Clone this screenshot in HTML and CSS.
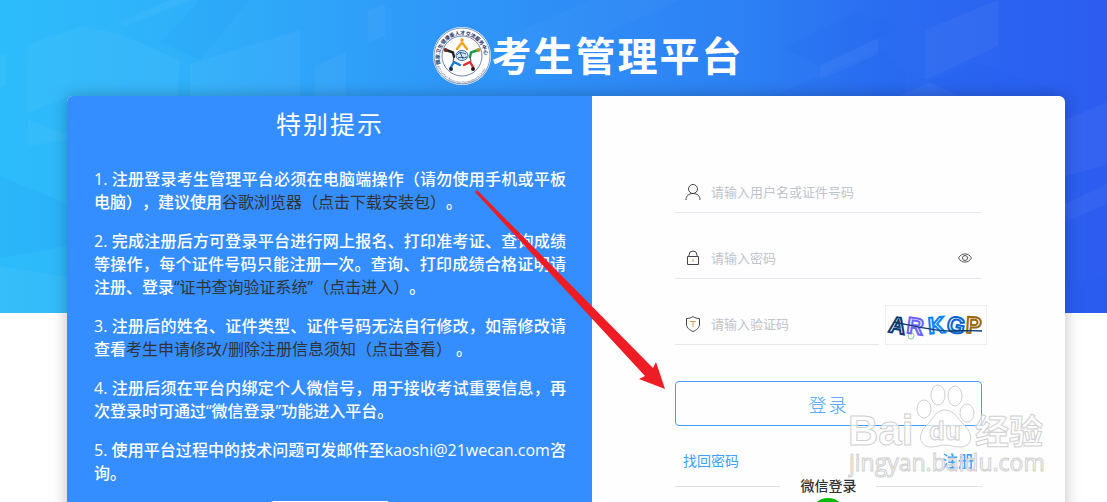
FILE: index.html
```html
<!DOCTYPE html>
<html lang="zh-CN">
<head>
  <meta charset="UTF-8">
  <meta name="viewport" content="width=device-width, initial-scale=1.0">
  <title>考生管理平台</title>
  <link rel="stylesheet" href="styles.css">
</head>
<body>
  <svg class="banner" viewBox="0 0 1107 313" preserveAspectRatio="none" aria-hidden="true">
    <defs>
      <linearGradient id="sky" x1="0" y1="0" x2="1" y2="0">
        <stop offset="0" stop-color="#2cbcfa"/>
        <stop offset="0.15" stop-color="#2fb2fa"/>
        <stop offset="0.4" stop-color="#2f97f8"/>
        <stop offset="0.67" stop-color="#2d81f4"/>
        <stop offset="0.8" stop-color="#2a6cf1"/>
        <stop offset="1" stop-color="#2c5cf0"/>
      </linearGradient>
    </defs>
    <rect width="1107" height="313" fill="url(#sky)"/>
    <g fill="#fff" fill-opacity="0.04">
      <path d="M28 44 84 26 120 34 180 60 178 96H70L26 114Z"/>
      <path d="M190 64 300 30 300 96H190Z"/>
      <path d="M0 55 6 55V85L0 88Z"/>
      <path d="M28 120 68 135V140L28 146Z"/>
      <path d="M0 266 67 277V313H0Z"/>
      <path d="M118 22 170 0H192L125 26Z"/>
      <path d="M315 66 346 52V96H315Z"/>
      <path d="M368 10 385 4V36L368 42Z"/>
      <path d="M820 65 878 38V54L820 80Z"/>
      <path d="M925 30 998 0V46L925 80Z"/>
      <path d="M900 96 930 82 958 96Z"/>
      <path d="M1065 204 1107 184V204L1065 222Z"/>
      <path d="M1065 120 1107 102V165L1065 176Z"/>
      <path d="M500 40 590 0H680L500 82Z" fill-opacity="0.02"/>
    </g>
    <g fill="#0a4fe8" fill-opacity="0.05">
      <path d="M784 48 855 12 900 28 820 66Z"/>
      <path d="M774 96 880 50 905 70V96Z"/>
      <path d="M928 82 975 62 1055 90V96H945Z"/>
      <path d="M1050 285 1107 277V313H1050Z"/>
      <path d="M160 42 200 0H250L200 60Z" fill-opacity="0.03"/>
      <path d="M0 176 67 204V246L0 258Z"/>
    </g>
  </svg>

  <header class="header">
    <svg class="logo" viewBox="0 0 60 60" aria-hidden="true">
      <defs>
        <path id="ring-top" d="M8.500 38A22.500 22.500 0 1 1 51.500 38"/>
        <path id="ring-bottom" d="M4 36A26.500 26.500 0 0 0 56 36"/>
      </defs>
      <circle cx="30" cy="30" r="29" fill="#fff"/>
      <circle cx="30" cy="30" r="28" fill="none" stroke="#34508c" stroke-width="0.600"/>
      <circle cx="30" cy="30" r="20" fill="none" stroke="#34508c" stroke-width="0.700"/>
      <text class="logo-cn"><textPath href="#ring-top">国家卫生健康委人才交流服务中心</textPath></text>
      <text class="logo-en"><textPath href="#ring-bottom">Health Human Resources Development Center</textPath></text>
      <g fill="none" stroke-width="2.400" stroke-linecap="round" stroke-linejoin="round">
        <path d="M25 23 30 16.500 35 23" stroke="#f0a41c"/>
        <path d="M14 24 21 26.500 22 31" stroke="#222"/>
        <path d="M46 24 39 26.500 38 31" stroke="#1c9a4c"/>
        <path d="M19 41 22 36 28 39" stroke="#1478d4"/>
        <path d="M41 41 38 36 32 39" stroke="#e02b30"/>
        <path d="M22 31 21 35M38 31 39 35" stroke="#444" stroke-width="1"/>
      </g>
      <circle cx="30" cy="14" r="1.800" fill="#f0a41c"/>
      <circle cx="13.500" cy="24" r="2" fill="#7b2a20"/>
      <circle cx="46.500" cy="24" r="2" fill="#b6951d"/>
      <circle cx="19" cy="43" r="2" fill="#1b2948"/>
      <circle cx="41" cy="43" r="2" fill="#2b1717"/>
      <ellipse cx="30" cy="29.500" rx="6" ry="5" fill="#d6e7f5" stroke="#3d6da5"/>
      <path d="M25 29c2-4 6-2 9-1M26 32c3-2 5 1 9-1M28 26l3 7" fill="none" stroke="#285387"/>
    </svg>
    <h1 class="title">考生管理平台</h1>
  </header>

  <main class="card">
    <section class="notice">
      <h2 class="notice-title">特别提示</h2>
      <p>1. 注册登录考生管理平台必须在电脑端操作（请勿使用手机或平板电脑），建议使用<a href="#">谷歌浏览器（点击下载安装包）</a>。</p>
      <p>2. 完成注册后方可登录平台进行网上报名、打印准考证、查询成绩等操作，每个证件号码只能注册一次。查询、打印成绩合格证明请注册、登录<a href="#">“证书查询验证系统”（点击进入）</a>。</p>
      <p>3. 注册后的姓名、证件类型、证件号码无法自行修改，如需修改请查看<a href="#">考生申请修改/删除注册信息须知（点击查看）</a> 。</p>
      <p>4. 注册后须在平台内绑定个人微信号，用于接收考试重要信息，再次登录时可通过“微信登录”功能进入平台。</p>
      <p>5. 使用平台过程中的技术问题可发邮件至kaoshi@21wecan.com咨询。</p>
      <button class="notice-button" type="button" aria-label="操作说明"></button>
    </section>

    <form class="login">
      <div class="field">
        <label for="username" aria-label="用户名">
          <svg class="icon" viewBox="0 0 16 16"><circle cx="8" cy="5" r="4.500"/><path d="M1 16c0-4 2.500-6.500 7-6.500s7 2.500 7 6.500"/></svg>
        </label>
        <input type="text" id="username" placeholder="请输入用户名或证件号码">
      </div>
      <div class="field">
        <label for="password" aria-label="密码">
          <svg class="icon" viewBox="0 0 16 16"><path d="M2.500 6.500h11v8h-11zM4 6.500V5a4 4 0 0 1 8 0v1.500"/><path class="gold" d="M8 9v3"/></svg>
        </label>
        <input type="password" id="password" placeholder="请输入密码">
        <button class="eye" type="button" aria-label="显示密码">
          <svg viewBox="0 0 14 14"><path d="M.500 7c3-5.500 10-5.500 13 0-3 5.500-10 5.500-13 0z"/><circle cx="7" cy="7" r="2.500"/></svg>
        </button>
      </div>
      <div class="captcha-row">
        <div class="field">
          <label for="captcha" aria-label="验证码">
            <svg class="icon" viewBox="0 0 16 16"><path d="M8 .500C6 2 4 2.500 1.500 2.500V8c0 4 3 6 6.500 7.500C11.500 14 14.500 12 14.500 8V2.500C12 2.500 10 2 8 .500z"/><path class="gold" d="M5 5.500h6M8 5.500V11"/></svg>
          </label>
          <input type="text" id="captcha" placeholder="请输入验证码">
        </div>
        <svg class="captcha" viewBox="0 0 100 38" role="img" aria-label="ARKGP">
          <circle cx="25" cy="30" r="3" fill="none" stroke="#8cc98c"/>
          <g class="captcha-text">
            <text x="3" y="27" stroke="#0d3b6e" transform="rotate(10 10 20)">A</text>
            <text x="21" y="28" stroke="#6c63ff" transform="rotate(8 29 20)">R</text>
            <text x="42" y="27" stroke="#0a84ff" transform="rotate(-5 50 20)">K</text>
            <text x="61" y="27" stroke="#0a66d0" transform="rotate(12 70 20)">G</text>
            <text x="80" y="27" stroke="#9c6a08" transform="rotate(4 88 20)">P</text>
          </g>
          <path d="M8 16C28 20 48 25 64 25S84 24 96 25" fill="none" stroke="#0d3b6e" stroke-width="1.300"/>
        </svg>
      </div>
      <button class="submit" type="submit">登录</button>
      <div class="links">
        <a href="#">找回密码</a>
        <a class="register" href="#">注册</a>
      </div>
      <div class="divider">微信登录</div>
      <button class="wechat" type="button" aria-label="微信登录"></button>
    </form>
  </main>

  <svg class="arrow" viewBox="0 0 192 200" aria-hidden="true">
    <path d="M1 2 3 0 179 178 182 172 191 199 165 189 171 186Z" fill="#ee1c24"/>
  </svg>

  <svg class="watermark" viewBox="0 0 200 96" aria-hidden="true">
    <g class="mark">
      <text class="mark-logo" x="0" y="61">Bai</text>
      <ellipse cx="76" cy="25" rx="7" ry="9"/>
      <ellipse cx="90" cy="11" rx="7" ry="10"/>
      <ellipse cx="107" cy="12" rx="7" ry="10"/>
      <ellipse cx="119" cy="29" rx="7" ry="9"/>
      <path d="M97 26c-9 0-12 9-19 16-10 10-5 21 5 21 6 0 9-2 14-2s9 2 15 2c11 0 15-11 5-21-7-7-11-16-20-16z"/>
      <text class="mark-du" x="81" y="56">du</text>
      <text class="mark-cn" x="127" y="60">经验</text>
      <text class="mark-url" x="1" y="87">jingyan.baidu.com</text>
    </g>
  </svg>
</body>
</html>
```

FILE: styles.css
```css
* {
  box-sizing: border-box;
}

body {
  position: relative;
  height: 100vh;
  margin: 0;
  overflow: hidden;
  background: #fff;
  color: #333;
  font-family: "Open Sans", "Noto Sans CJK SC", sans-serif;
  text-spacing-trim: space-all;
}

a {
  text-decoration: none;
}

button,
input {
  font-family: inherit;
}

/* 顶部背景 */
.banner {
  position: absolute;
  top: 0;
  left: 0;
  z-index: -1;
  width: 100%;
  height: 313px;
}

.header {
  display: flex;
  justify-content: center;
  align-items: center;
  height: 96px;
  padding: 16px 0 0 68px;
}

.logo {
  width: 60px;
  height: 60px;
}

.logo-cn {
  fill: #1d2f66;
  font-size: 5px;
  font-weight: bold;
}

.logo-en {
  fill: #34508c;
  font-size: 3px;
}

.title {
  margin: 0;
  color: #fff;
  font-size: 40px;
  font-weight: bold;
  line-height: 60px;
  letter-spacing: 2px;
}

/* 主体卡片 */
.card {
  display: flex;
  margin: 0 42px 0 67px;
  border-radius: 6px;
  overflow: hidden;
  background: #fefefe;
  box-shadow: 0 0 16px rgba(0, 0, 0, 0.25);
}

.notice {
  flex: none;
  width: 52.6%;
  padding: 9px 26px 24px 27px;
  background: #348eff;
  color: #fff;
  font-size: 16px;
  line-height: 23px;
  text-align: justify;
}

.notice-title {
  margin: 0 0 25px;
  font-size: 25px;
  font-weight: normal;
  line-height: 38px;
  letter-spacing: 2px;
  text-align: center;
}

.notice p {
  margin: 0 0 16px;
  font-weight: 500;
}

.notice a {
  color: #333;
  font-weight: 400;
}

.notice-button {
  display: block;
  width: 120px;
  height: 40px;
  margin: 0 auto;
  border: none;
  border-radius: 4px;
  background: #fff;
}

/* 登录表单 */
.login {
  flex: 1;
  min-width: 0;
  padding: 76px 83px 24px;
}

.field {
  display: flex;
  align-items: center;
  height: 41px;
  margin-bottom: 25px;
  padding: 0 10px;
  border-bottom: 1px solid #e6e6ee;
}

.field label {
  display: flex;
}

.field input {
  flex: 1;
  min-width: 0;
  height: 38px;
  padding: 0 10px;
  border: none;
  outline: none;
  background: transparent;
  font-size: 13px;
}

.field input::placeholder {
  color: #c0c4cc;
}

.icon {
  width: 16px;
  height: 16px;
  fill: none;
  stroke: #444;
}

.icon .gold {
  stroke: #d49a50;
}

.eye {
  display: flex;
  padding: 0;
  border: none;
  background: none;
}

.eye svg {
  width: 14px;
  height: 14px;
  fill: none;
  stroke: #555;
}

.captcha-row {
  display: flex;
  align-items: center;
  gap: 6px;
  margin: 0 -5px 36px 0;
}

.captcha-row .field {
  flex: 1;
  min-width: 0;
  margin-bottom: 0;
}

.captcha {
  flex: none;
  width: 102px;
  height: 40px;
  border: 1px solid #eee;
}

.captcha-text {
  fill: #fff;
  stroke-width: 2px;
  font-family: "Liberation Sans", sans-serif;
  font-size: 23px;
  font-weight: bold;
}

.submit {
  width: 100%;
  height: 45px;
  border: 1px solid #409eff;
  border-radius: 4px;
  background: transparent;
  color: #409eff;
  font-size: 18px;
  font-weight: 300;
  letter-spacing: 2px;
}

.links {
  display: flex;
  justify-content: space-between;
  align-items: center;
  padding: 22px 8px 0;
  line-height: 26px;
}

.links a {
  color: #409eff;
  font-size: 14px;
}

.links .register {
  font-size: 16px;
  font-weight: 500;
}

.divider {
  display: flex;
  align-items: center;
  gap: 20px;
  color: #303133;
  font-size: 14px;
  font-weight: 500;
  line-height: 24px;
}

.divider::before,
.divider::after {
  content: "";
  flex: 1;
  height: 1px;
  background: #dcdfe6;
}

.wechat {
  display: block;
  width: 36px;
  height: 36px;
  margin: 0 auto;
  border: none;
  border-radius: 50%;
  background: #09bb07;
}

/* 指向登录按钮的箭头 */
.arrow {
  position: absolute;
  top: 190px;
  left: 474px;
  width: 192px;
  height: 200px;
}

/* 水印 */
.watermark {
  position: absolute;
  right: 59px;
  bottom: 22px;
  width: 200px;
  height: 96px;
  pointer-events: none;
}

.mark {
  fill: #fff;
  fill-opacity: 0.7;
  stroke: #d0d0d0;
  stroke-width: 1px;
}

.mark-logo {
  font-family: "Liberation Sans", sans-serif;
  font-size: 42px;
  font-weight: bold;
}

.mark-du {
  font-family: "Liberation Sans", sans-serif;
  font-size: 26px;
  font-weight: bold;
}

.mark-cn {
  font-size: 34px;
  font-weight: bold;
}

.mark-url {
  font-size: 23px;
}
```
